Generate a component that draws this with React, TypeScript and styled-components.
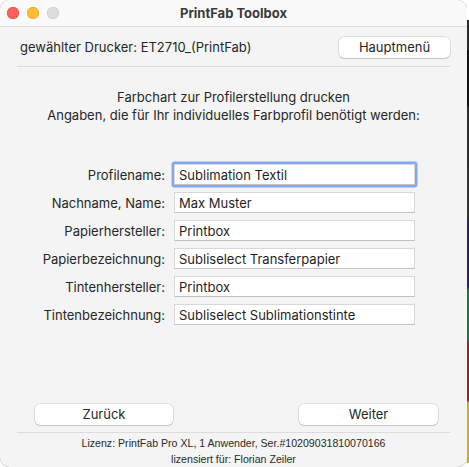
import React from "react";
import styled, { createGlobalStyle } from "styled-components";

const GlobalStyle = createGlobalStyle`
  html, body {
    margin: 0;
    padding: 0;
    background: #ffffff;
  }
  * {
    box-sizing: border-box;
  }
`;

const Screen = styled.div`
  display: flex;
  width: 469px;
  height: 467px;
  overflow: hidden;
  background: #ffffff;
`;

const Window = styled.div`
  width: 467px;
  height: 467px;
  display: flex;
  flex-direction: column;
  background: #f4f4f4;
  border-radius: 10px;
  overflow: hidden;
  font-family: Inter, "Liberation Sans", sans-serif;
  color: #262626;
  font-size: 13px;
  box-shadow: 0 0 0 0.5px #c8c8c8;
`;

// desktop strip peeking out at the right edge
const DesktopEdge = styled.div`
  width: 2px;
  height: 467px;
  background: linear-gradient(
    to bottom,
    #ffffff 0 20px,
    #2c2c2c 20px 50px,
    #111111 50px 105px,
    #2e2e2e 108px 165px,
    #333333 167px 218px,
    #2d2163 221px 287px,
    #167a45 290px 340px,
    #a51e1e 343px 400px,
    #c9b21a 403px 463px,
    #ffffff 463px
  );
`;

const TitleBar = styled.div`
  position: relative;
  height: 27px;
  flex: none;
  display: flex;
  align-items: center;
  justify-content: center;
  background: #f9f9f9;
  border-bottom: 1px solid #dedede;
`;

const Lights = styled.div`
  position: absolute;
  left: 7px;
  top: 7px;
  display: flex;
  gap: 8px;
`;

const Light = styled.span<{ $color: string; $edge: string }>`
  width: 12px;
  height: 12px;
  border-radius: 50%;
  background: ${(p) => p.$color};
  box-shadow: inset 0 0 0 0.5px ${(p) => p.$edge};
`;

const Title = styled.div`
  font-weight: 700;
  font-size: 13px;
  color: #3a3a3a;
  margin-top: -1px;
`;

const Body = styled.div`
  flex: 1;
  display: flex;
  flex-direction: column;
  padding: 10px 17px 0 17px;
`;

const PrinterRow = styled.div`
  display: flex;
  align-items: center;
  justify-content: space-between;
  padding-left: 3px;
  height: 20px;
`;

const MacButton = styled.button<{ $width: number }>`
  width: ${(p) => p.$width}px;
  height: 21px;
  border: none;
  border-radius: 5px;
  background: #ffffff;
  box-shadow: 0 0 0 0.5px rgba(0, 0, 0, 0.18), 0 1px 1px rgba(0, 0, 0, 0.12);
  font-family: Inter, "Liberation Sans", sans-serif;
  font-size: 13px;
  color: #262626;
  padding: 0 0 1px;
`;

const Separator = styled.div<{ $gap: number }>`
  height: 1px;
  margin-top: ${(p) => p.$gap}px;
  background: #dcdcdc;
`;

const Intro = styled.div`
  margin-top: 21px;
  text-align: center;
  line-height: 18px;
`;

const Form = styled.div`
  margin-top: 40px;
  display: grid;
  grid-template-columns: 148px 241px;
  column-gap: 9px;
  row-gap: 7px;
  align-items: center;
`;

const Label = styled.div`
  text-align: right;
`;

const Field = styled.input<{ $focused?: boolean }>`
  height: 21px;
  width: 241px;
  border: 1px solid #d8d8d8;
  border-bottom-color: #c2c2c2;
  background: #ffffff;
  padding: 0 4px;
  font-family: Inter, "Liberation Sans", sans-serif;
  font-size: 13px;
  color: #1f1f1f;
  outline: none;
  box-shadow: ${(p) => (p.$focused ? "0 0 0 2.5px #82a8ef" : "none")};
  border-radius: ${(p) => (p.$focused ? "1px" : "0")};
`;

const Spacer = styled.div`
  flex: 1;
`;

const NavRow = styled.div`
  display: flex;
  justify-content: space-between;
  padding: 0 12px 0 18px;
`;

const Footer = styled.div`
  font-family: "Liberation Sans", sans-serif;
  font-size: 10.6px;
  line-height: 16px;
  text-align: center;
  color: #2a2a2a;
  padding: 2px 0 0;
`;

const fields = [
  { label: "Profilename:", value: "Sublimation Textil", focused: true },
  { label: "Nachname, Name:", value: "Max Muster" },
  { label: "Papierhersteller:", value: "Printbox" },
  { label: "Papierbezeichnung:", value: "Subliselect Transferpapier" },
  { label: "Tintenhersteller:", value: "Printbox" },
  { label: "Tintenbezeichnung:", value: "Subliselect Sublimationstinte" },
];

export default function App() {
  return (
    <>
      <GlobalStyle />
      <Screen>
        <Window>
          <TitleBar>
            <Lights>
              <Light $color="#fe5f57" $edge="#e0443e" />
              <Light $color="#febc2e" $edge="#dea123" />
              <Light $color="#dcdcdc" $edge="#c8c8c8" />
            </Lights>
            <Title>PrintFab Toolbox</Title>
          </TitleBar>
          <Body>
            <PrinterRow>
              <span>gewählter Drucker: ET2710_(PrintFab)</span>
              <MacButton $width={111}>Hauptmenü</MacButton>
            </PrinterRow>
            <Separator $gap={9} />
            <Intro>
              Farbchart zur Profilerstellung drucken
              <br />
              Angaben, die für Ihr individuelles Farbprofil benötigt werden:
            </Intro>
            <Form>
              {fields.map((f) => (
                <React.Fragment key={f.label}>
                  <Label>{f.label}</Label>
                  <Field $focused={f.focused} defaultValue={f.value} readOnly />
                </React.Fragment>
              ))}
            </Form>
            <Spacer />
            <NavRow>
              <MacButton $width={138}>Zurück</MacButton>
              <MacButton $width={139}>Weiter</MacButton>
            </NavRow>
            <Separator $gap={7} />
            <Footer>
              Lizenz: PrintFab Pro XL, 1 Anwender, Ser.#10209031810070166
              <br />
              lizensiert für: Florian Zeiler
            </Footer>
          </Body>
        </Window>
        <DesktopEdge />
      </Screen>
    </>
  );
}
